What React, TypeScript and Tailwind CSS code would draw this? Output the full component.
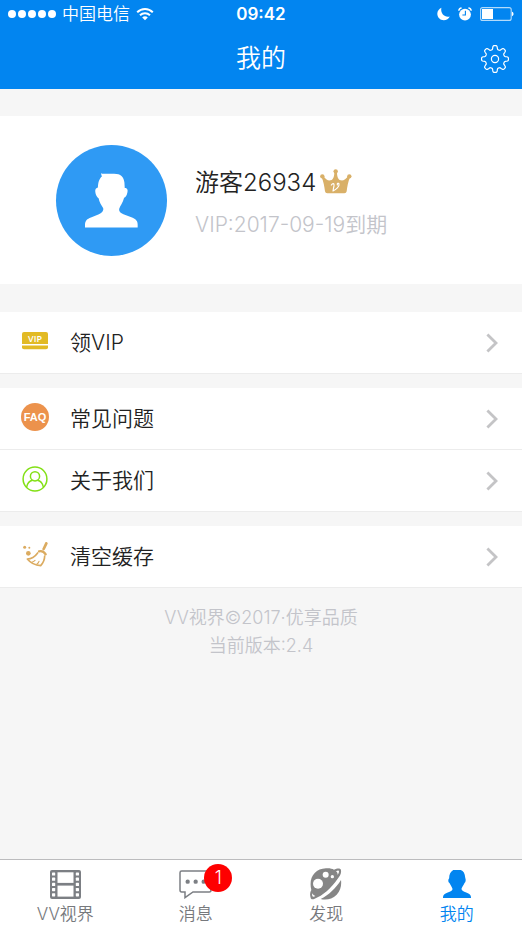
import { useState, type ReactNode } from 'react';

type TabKey = 'home' | 'messages' | 'discover' | 'mine';

// Outline of the eight-toothed settings gear
const gearPoints = Array.from({ length: 160 }, (_, i) => {
  const a = (i / 160) * Math.PI * 2;
  const r = 11.6 + 1.9 * Math.tanh(2.2 * Math.cos(a * 8));
  return `${(15 + r * Math.cos(a)).toFixed(2)},${(15 + r * Math.sin(a)).toFixed(2)}`;
}).join(' ');

function GearIcon() {
  return (
    <svg width="30" height="30" viewBox="0 0 30 30" fill="none" stroke="white" strokeWidth="1.2" strokeLinejoin="round">
      <polygon points={gearPoints} />
      <circle cx="15" cy="15" r="3.6" />
    </svg>
  );
}

function WifiIcon() {
  return (
    <svg width="18" height="14" viewBox="0 0 18 14" fill="none" stroke="white" strokeWidth="2">
      <path d="M1.2 5.2C5.6 .8 12.4 .8 16.8 5.2" />
      <path d="M4 8.2C6.8 5.5 11.2 5.5 14 8.2" />
      <path d="M6.2 10.4C7.8 8.9 10.2 8.9 11.8 10.4L9 13.2Z" fill="white" stroke="none" />
    </svg>
  );
}

function MoonIcon() {
  return (
    <svg width="13" height="14" viewBox="0 0 13 14" fill="white">
      <path d="M4.4 .8C2 1.8 .3 4.2 .3 6.8C.3 10.4 3.2 13.3 6.8 13.3C9.4 13.3 11.8 11.8 12.8 9.5C8.2 11 3 6.6 4.4 .8Z" />
    </svg>
  );
}

function AlarmIcon() {
  return (
    <svg width="14" height="14" viewBox="0 0 14 14">
      <circle cx="7" cy="7.6" r="5.9" fill="white" />
      <path d="M.8 3.7A3 3 0 0 1 3.6 1M13.2 3.7A3 3 0 0 0 10.4 1" fill="none" stroke="white" strokeWidth="1.4" />
      <path d="M7.4 3.8V8H4.4" fill="none" stroke="#0285f0" strokeWidth="1.1" />
    </svg>
  );
}

function BatteryIcon() {
  return (
    <svg width="34" height="14" viewBox="0 0 34 14">
      <rect x=".6" y=".6" width="30.6" height="12.8" rx="2" fill="none" stroke="white" strokeOpacity=".7" strokeWidth="1.1" />
      <rect x="2" y="2" width="11" height="10" fill="white" />
      <path d="M32 4.8C34 5.4 34 8.6 32 9.2Z" fill="white" />
    </svg>
  );
}

function AvatarIcon() {
  return (
    <svg width="53" height="55" viewBox="0 0 160 165" fill="white">
      <path d="M48 0L52 2H88C108 2 117 12 119 28L120 45C128 44 130 52 128 58C126 68 122 72 118 74C115 88 106 98 103 108C102 116 108 120 116 124L142 134C156 140 159 146 159 156V164H0V154C1 144 6 138 18 134L42 124C52 120 57 112 55 106C50 98 43 88 41 76C36 72 32 66 31 56C30 48 34 44 39 43C39 30 43 16 51 10Z" />
    </svg>
  );
}

function CrownIcon() {
  return (
    <svg width="32" height="25" viewBox="0 0 96 75">
      <g fill="#d9b068">
        <circle cx="47" cy="7" r="6.5" />
        <circle cx="7" cy="22" r="6.5" />
        <circle cx="88" cy="22" r="6.5" />
        <path d="M5 25L10 20C16 30 24 36 32 34C41 31 43 20 43 8H51C51 20 53 31 62 34C70 36 78 30 85 20L90 25C84 38 82 54 80 67C79 71 77 73 73 73H22C18 73 16 71 15 67C13 54 11 38 5 25Z" />
      </g>
      <path d="M34 48C38 42 43 42 42 50L39 66C48 62 59 52 57 45C55 41 51 43 52 48" fill="none" stroke="white" strokeWidth="3.6" strokeLinecap="round" strokeLinejoin="round" />
    </svg>
  );
}

function VipIcon() {
  return (
    <svg width="26" height="18" viewBox="0 0 26 18">
      <path d="M2 0H24Q26 0 26 2V12H0V2Q0 0 2 0Z" fill="#e2ba24" />
      <path d="M0 13.6H26V15.5Q26 17.2 24 17.2H2Q0 17.2 0 15.5Z" fill="#e2ba24" />
      <text x="13" y="9.6" textAnchor="middle" fill="white" fontSize="9" fontWeight="600" fontFamily="Open Sans, sans-serif">VIP</text>
    </svg>
  );
}

function FaqIcon() {
  return (
    <svg width="28" height="28" viewBox="0 0 28 28">
      <circle cx="14" cy="14" r="14" fill="#ec924c" />
      <text x="14" y="18" textAnchor="middle" fill="white" fontSize="11" fontWeight="700" fontFamily="Liberation Sans, sans-serif">FAQ</text>
    </svg>
  );
}

function AboutIcon() {
  return (
    <svg width="26" height="26" viewBox="0 0 26 26" fill="none" stroke="#83e016" strokeWidth="1.5">
      <circle cx="13" cy="13" r="11.9" />
      <circle cx="13" cy="10.3" r="4.6" />
      <path d="M4.6 21.2C5.4 17.2 8.2 14.6 10.6 14.2M21.4 21.2C20.6 17.2 17.8 14.6 15.4 14.2" />
    </svg>
  );
}

function BroomIcon() {
  return (
    <svg width="25" height="25" viewBox="0 0 75 75" fill="none" stroke="#dbab60" strokeLinecap="round">
      <path d="M70 4L62 21" strokeWidth="8" />
      <path d="M48 28C56 26 64 30 68 37" strokeWidth="7" />
      <path d="M44 33C36 44 26 51 13 51C22 62 37 70 53 71C61 62 65 52 65 42" strokeWidth="5" strokeLinejoin="round" />
      <path d="M28 60C31 59 34 57 36 55M42 66C45 64 47 61 48 58" strokeWidth="3.5" />
      <g fill="#dbab60" stroke="none">
        <circle cx="16" cy="34" r="7" />
        <circle cx="5" cy="16" r="4.5" />
        <circle cx="19" cy="17" r="3" />
      </g>
    </svg>
  );
}

function ChevronIcon() {
  return (
    <svg width="12" height="20" viewBox="0 0 12 20" fill="none" stroke="#c4c4c6" strokeWidth="2.8">
      <path d="M1.4 1.6L10 10L1.4 18.4" />
    </svg>
  );
}

function FilmIcon() {
  return (
    <svg width="31" height="29" viewBox="0 0 31 29">
      <rect width="31" height="29" rx="2" fill="#7c7f84" />
      <g fill="white">
        <rect x="7.5" y="2.3" width="16" height="10.6" />
        <rect x="7.5" y="15.6" width="16" height="11" />
        {[2.4, 7.6, 12.8, 18, 23.2].map(y => (
          <g key={y}>
            <rect x="2" y={y} width="3.2" height="3.2" rx=".6" />
            <rect x="25.8" y={y} width="3.2" height="3.2" rx=".6" />
          </g>
        ))}
      </g>
    </svg>
  );
}

function ChatIcon() {
  return (
    <svg width="33" height="29" viewBox="0 0 99 87">
      <path d="M8 3H91Q96 3 96 8V60Q96 66 91 66H42L18 83V66H8Q3 66 3 60V8Q3 3 8 3Z" fill="none" stroke="#7c7f84" strokeWidth="4.5" />
      <g fill="#7c7f84">
        <circle cx="26" cy="35" r="6.5" />
        <circle cx="50" cy="35" r="6.5" />
        <circle cx="74" cy="35" r="6.5" />
      </g>
    </svg>
  );
}

function PlanetIcon() {
  return (
    <svg width="32" height="32" viewBox="0 0 96 96">
      <g fill="#868686">
        <path d="M2 90C-1 80 0 72 4 66C-5 30 14 2 48 1C58 0 66 2 72 5C80 1 90 0 92 4C96 14 90 24 82 34C64 60 38 84 14 92C8 95 3 94 2 90Z" />
        <path d="M32 93C56 82 78 60 93 36C95 50 92 68 80 80C66 94 48 97 32 93Z" />
      </g>
      <g fill="white">
        <circle cx="24" cy="47" r="15" />
        <circle cx="47" cy="20" r="9" />
        <circle cx="67" cy="26" r="5" />
        <path d="M78 10C83 7 87 7 87 10C87 14 85 18 83 21C83 16 82 13 78 10Z" />
        <path d="M7 76C9 80 12 83 16 84C12 87 8 87 7 84C6 81 6 78 7 76Z" />
      </g>
    </svg>
  );
}

function PersonIcon() {
  return (
    <svg width="28" height="28" viewBox="0 0 82 82" fill="#0285f0">
      <path d="M30 0H52C60 2 64 10 65 22C68 30 66 36 63 38C60 46 55 50 54 56C55 60 60 64 68 66C78 69 82 74 82 80V82H0V80C0 74 4 69 14 66C22 64 28 60 28 56C26 50 22 44 19 38C15 36 14 28 18 24C18 12 22 6 30 0Z" />
    </svg>
  );
}

function MenuRow({ icon, label }: { icon: ReactNode; label: string }) {
  return (
    <button className="flex h-[62px] w-full items-center gap-5 border-b border-[#ececec] bg-white pl-5 pr-6 text-left">
      <span className="flex w-[30px] justify-center pb-1">{icon}</span>
      <span className="flex-1 text-[21px] text-[#222]">{label}</span>
      <ChevronIcon />
    </button>
  );
}

const tabs: { key: TabKey; label: string; icon: ReactNode; badge?: number }[] = [
  { key: 'home', label: 'VV视界', icon: <FilmIcon /> },
  { key: 'messages', label: '消息', icon: <ChatIcon />, badge: 1 },
  { key: 'discover', label: '发现', icon: <PlanetIcon /> },
  { key: 'mine', label: '我的', icon: <PersonIcon /> },
];

export default function App() {
  const [activeTab, setActiveTab] = useState<TabKey>('mine');

  return (
    <div className="flex min-h-screen flex-col bg-[#f6f6f6] font-['Inter','Noto_Sans_CJK_SC',sans-serif] font-[350]">
      <header className="bg-[#0285f0] text-white">
        {/* Status bar */}
        <div className="grid h-7 grid-cols-3 items-center px-2">
          <div className="flex items-center gap-1.5">
            <div className="flex gap-0.5">
              {[0, 1, 2, 3, 4].map(i => (
                <span key={i} className="size-2 rounded-full bg-white" />
              ))}
            </div>
            <span className="text-[17px] leading-7">中国电信</span>
            <WifiIcon />
          </div>
          <div className="text-center text-[17px] font-semibold leading-7">09:42</div>
          <div className="flex items-center justify-end gap-2">
            <MoonIcon />
            <AlarmIcon />
            <BatteryIcon />
          </div>
        </div>

        <div className="grid h-[61px] grid-cols-[1fr_auto_1fr] items-center px-3">
          <h1 className="col-start-2 text-[25px]">我的</h1>
          <button aria-label="设置" className="justify-self-end">
            <GearIcon />
          </button>
        </div>
      </header>

      <main className="flex-1">
        {/* Profile */}
        <section className="mt-[27px] flex h-[168px] items-center gap-7 bg-white px-14">
          <div className="flex size-[111px] items-center justify-center rounded-full bg-[#2f9af4]">
            <AvatarIcon />
          </div>
          <div className="pt-2">
            <div className="flex items-center gap-1">
              <span className="text-2xl leading-[42px] text-[#222]">游客26934</span>
              <span className="pb-1">
                <CrownIcon />
              </span>
            </div>
            <p className="text-[21px] leading-[42px] text-[#c3c4ca]">VIP:2017-09-19到期</p>
          </div>
        </section>

        <section className="mt-7">
          <MenuRow icon={<VipIcon />} label="领VIP" />
        </section>
        <section className="mt-[14px]">
          <MenuRow icon={<FaqIcon />} label="常见问题" />
          <MenuRow icon={<AboutIcon />} label="关于我们" />
        </section>
        <section className="mt-[14px]">
          <MenuRow icon={<BroomIcon />} label="清空缓存" />
        </section>

        <div className="mt-4 text-center text-lg leading-7 text-[#c3c4ca]">
          <p>VV视界©2017·优享品质</p>
          <p>当前版本:2.4</p>
        </div>
      </main>

      <nav className="grid h-[69px] grid-cols-4 border-t border-[#bcbcbe] bg-white">
        {tabs.map(tab => (
          <button
            key={tab.key}
            onClick={() => setActiveTab(tab.key)}
            className={`flex flex-col items-center pt-2 text-[17px] leading-7 ${
              activeTab === tab.key ? 'text-[#0285f0]' : 'text-[#77797d]'
            }`}
          >
            <span className="relative flex h-8 items-center">
              {tab.icon}
              {tab.badge && (
                <span className="absolute -right-5 -top-1 flex size-7 items-center justify-center rounded-full bg-[#fe0000] text-lg text-white">
                  {tab.badge}
                </span>
              )}
            </span>
            <span>{tab.label}</span>
          </button>
        ))}
      </nav>
    </div>
  );
}
